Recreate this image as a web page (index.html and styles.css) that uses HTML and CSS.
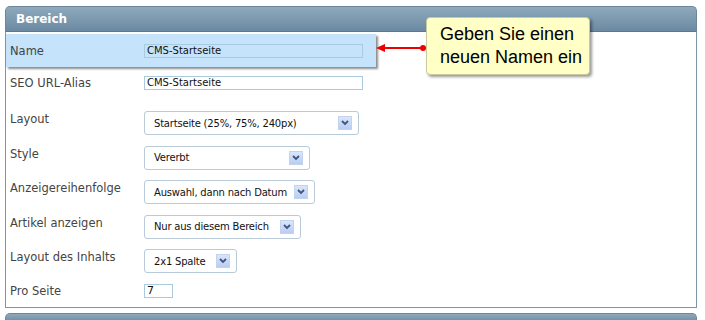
FILE: index.html
```html
<!DOCTYPE html>
<html lang="de">
<head>
    <meta charset="UTF-8">
    <title>Bereich</title>
    <link rel="stylesheet" href="styles.css">
</head>
<body>

<div class="panel">
    <div class="panel-head">Bereich</div>
    <div class="panel-body">

        <div class="row row-name">
            <div class="label">Name</div>
            <div class="text-input wide">CMS-Startseite</div>
        </div>

        <div class="row row-input">
            <div class="label">SEO URL-Alias</div>
            <div class="text-input wide plain">CMS-Startseite</div>
        </div>

        <div class="row row-select">
            <div class="label">Layout</div>
            <div class="select" style="width: 215px">
                <span class="select-text">Startseite (25%, 75%, 240px)</span>
                <span class="select-btn"><svg width="8" height="6" viewBox="0 0 8 6"><path d="M1 1 L4 4 L7 1" fill="none" stroke="#3f5480" stroke-width="1.8"/></svg></span>
            </div>
        </div>

        <div class="row row-select">
            <div class="label">Style</div>
            <div class="select" style="width: 166px">
                <span class="select-text">Vererbt</span>
                <span class="select-btn"><svg width="8" height="6" viewBox="0 0 8 6"><path d="M1 1 L4 4 L7 1" fill="none" stroke="#3f5480" stroke-width="1.8"/></svg></span>
            </div>
        </div>

        <div class="row row-select">
            <div class="label">Anzeigereihenfolge</div>
            <div class="select" style="width: 171px">
                <span class="select-text">Auswahl, dann nach Datum</span>
                <span class="select-btn"><svg width="8" height="6" viewBox="0 0 8 6"><path d="M1 1 L4 4 L7 1" fill="none" stroke="#3f5480" stroke-width="1.8"/></svg></span>
            </div>
        </div>

        <div class="row row-select">
            <div class="label">Artikel anzeigen</div>
            <div class="select" style="width: 157px">
                <span class="select-text">Nur aus diesem Bereich</span>
                <span class="select-btn"><svg width="8" height="6" viewBox="0 0 8 6"><path d="M1 1 L4 4 L7 1" fill="none" stroke="#3f5480" stroke-width="1.8"/></svg></span>
            </div>
        </div>

        <div class="row row-select">
            <div class="label">Layout des Inhalts</div>
            <div class="select" style="width: 93px">
                <span class="select-text">2x1 Spalte</span>
                <span class="select-btn"><svg width="8" height="6" viewBox="0 0 8 6"><path d="M1 1 L4 4 L7 1" fill="none" stroke="#3f5480" stroke-width="1.8"/></svg></span>
            </div>
        </div>

        <div class="row row-input last">
            <div class="label">Pro Seite</div>
            <div class="text-input small plain">7</div>
        </div>

    </div>
</div>

<div class="panel-head next"></div>

<!-- Hinweis -->
<svg class="pointer" width="52" height="10" viewBox="0 0 52 10">
    <line x1="8" y1="5" x2="48" y2="5" stroke="#ee0000" stroke-width="2"/>
    <path d="M0 5 L9 1 L9 9 Z" fill="#ee0000"/>
    <circle cx="47" cy="5" r="3" fill="#ee0000"/>
</svg>
<div class="callout">Geben Sie einen<br>neuen Namen ein</div>

</body>
</html>
```

FILE: styles.css
```css
body {
    margin: 0;
    padding: 6px 8px 0 5px;
    background: #ffffff;
    font-family: "DejaVu Sans", Verdana, sans-serif;
    font-size: 11px;
    color: #333;
    height: 320px;
    box-sizing: border-box;
    overflow: hidden;
}

.panel {
    width: 692px;
}

.panel-head {
    height: 24px;
    line-height: 24px;
    padding-left: 10px;
    color: #fff;
    font-weight: bold;
    font-size: 12px;
    background: linear-gradient(#8fa9bc, #6b8aa2);
    border: 1px solid #6c879c;
    border-bottom-color: #5a7890;
    border-radius: 5px 5px 0 0;
}

.panel-body {
    border: 1px solid #7b95a9;
    border-top: none;
    padding-top: 2px;
    height: 273px;
}

.row {
    display: flex;
    align-items: flex-start;
}

.label {
    width: 134px;
    padding-left: 4px;
    font-size: 11.5px;
    line-height: 14px;
    color: #444;
    flex-shrink: 0;
}

.row-name {
    width: 370px;
    height: 33px;
    background: #c5e4fb;
    box-shadow: 2px 2px 2px rgba(0, 0, 0, 0.45);
    align-items: center;
}

.row-input {
    height: 34px;
    padding-top: 9px;
    box-sizing: border-box;
}

.row-input.last {
    padding-top: 10px;
}

.row-select {
    height: 34.5px;
    padding-top: 10px;
    box-sizing: border-box;
}

.row-select .label {
    padding-top: 1px;
}

.text-input {
    height: 12px;
    line-height: 12px;
    padding: 0 2px;
    border: 1px solid #a9cbe0;
    color: #111;
    font-size: 10px;
    background: #c5e4fb;
}

.text-input.plain {
    background: #fff;
}

.text-input.wide {
    width: 213px;
}

.text-input.small {
    width: 23px;
    font-size: 11px;
}

.select {
    box-sizing: border-box;
    height: 24px;
    display: flex;
    align-items: center;
    justify-content: space-between;
    padding: 0 6px 0 9px;
    border: 1px solid #b9cad8;
    border-radius: 3px;
    background: #fff;
    color: #111;
    font-size: 10px;
    letter-spacing: -0.2px;
    white-space: nowrap;
}

.select-btn {
    width: 14px;
    height: 14px;
    flex-shrink: 0;
    display: flex;
    align-items: center;
    justify-content: center;
    background: linear-gradient(#d9e6fb, #b9cdf1);
    border: 1px solid #c3d3ee;
    box-sizing: border-box;
}

.panel-head.next {
    margin-top: 5px;
    width: 680px;
    height: 8px;
    border-bottom: none;
}

.pointer {
    position: absolute;
    left: 376px;
    top: 43px;
}

.callout {
    position: absolute;
    left: 426px;
    top: 17px;
    width: 164px;
    height: 58px;
    box-sizing: border-box;
    padding: 5px 0 0 13px;
    background: #ffffc6;
    border: 1px solid #c9c9a0;
    border-radius: 4px;
    box-shadow: 2px 2px 3px rgba(0, 0, 0, 0.4);
    font-family: "Liberation Sans", Arial, sans-serif;
    font-size: 18px;
    line-height: 23px;
    color: #000;
}
```
